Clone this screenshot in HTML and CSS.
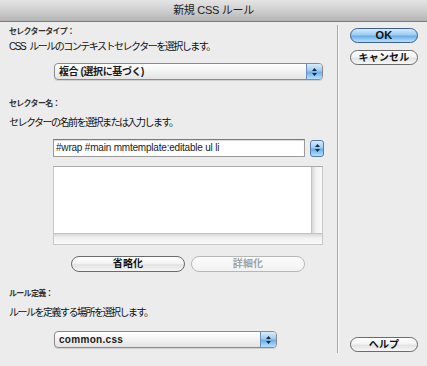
FILE: index.html
```html
<!DOCTYPE html>
<html lang="ja">
<head>
    <meta charset="UTF-8">
    <title>新規 CSS ルール</title>
    <link rel="stylesheet" href="styles.css">
</head>
<body>
    <div class="window">
        <div class="titlebar">新規 CSS ルール</div>

        <div class="content">
            <div class="main">
                <div class="label">セレクタータイプ：</div>
                <div class="desc">CSS ルールのコンテキストセレクターを選択します。</div>
                <div class="popup popup-type">
                    <span class="popup-label">複合 (選択に基づく)</span>
                    <span class="arrows">
                        <svg width="7" height="10" viewBox="0 0 7 10"><path d="M3.5 1 L6 4 H1 Z M3.5 9 L6 6 H1 Z" fill="#1d2a3a"/></svg>
                    </span>
                </div>

                <div class="label label-gap">セレクター名：</div>
                <div class="desc desc-gap">セレクターの名前を選択または入力します。</div>
                <div class="field-row">
                    <div class="field">#wrap #main mmtemplate:editable ul li</div>
                    <span class="stepper">
                        <svg width="7" height="10" viewBox="0 0 7 10"><path d="M3.5 1 L6 4 H1 Z M3.5 9 L6 6 H1 Z" fill="#1d2a3a"/></svg>
                    </span>
                </div>
                <div class="list">
                    <div class="list-body">
                        <div class="list-area"></div>
                        <div class="vscroll"></div>
                    </div>
                    <div class="hscroll"></div>
                </div>
                <div class="btn-row">
                    <button class="pill wide">省略化</button>
                    <button class="pill wide" disabled>詳細化</button>
                </div>

                <div class="label label-gap2">ルール定義：</div>
                <div class="desc desc-gap">ルールを定義する場所を選択します。</div>
                <div class="popup popup-file">
                    <span class="popup-label latin">common.css</span>
                    <span class="arrows">
                        <svg width="7" height="10" viewBox="0 0 7 10"><path d="M3.5 1 L6 4 H1 Z M3.5 9 L6 6 H1 Z" fill="#1d2a3a"/></svg>
                    </span>
                </div>
            </div>

            <div class="divider"></div>

            <div class="side">
                <button class="pill default">OK</button>
                <button class="pill cancel">キャンセル</button>
                <button class="pill help">ヘルプ</button>
            </div>
        </div>
    </div>
</body>
</html>
```

FILE: styles.css
```css
html, body {
    margin: 0;
    padding: 0;
}
body {
    width: 427px;
    height: 366px;
    overflow: hidden;
    background-color: #ececec;
    font-family: "Liberation Sans", "Noto Sans CJK JP", sans-serif;
    color: #1a1a1a;
}
.window {
    display: flex;
    flex-direction: column;
    height: 366px;
}
.titlebar {
    height: 21px;
    line-height: 21px;
    text-align: center;
    font-size: 11px;
    letter-spacing: -0.3px;
    color: #222;
    background: linear-gradient(#e4e4e4, #cfcfcf 50%, #b4b4b4);
    border-bottom: 1px solid #7c7c7c;
}
.content {
    flex: 1;
    display: flex;
}
.main {
    width: 328px;
    padding-left: 9px;
    display: flex;
    flex-direction: column;
}
.label {
    margin-top: 4px;
    height: 12px;
    line-height: 12px;
    font-size: 8px;
    font-weight: bold;
    letter-spacing: -0.7px;
    color: #333;
}
.label-gap {
    margin-top: 18px;
}
.label-gap2 {
    margin-top: 16px;
}
.desc {
    margin-top: 2px;
    height: 14px;
    line-height: 14px;
    font-size: 10px;
    letter-spacing: -1.5px;
    word-spacing: 3px;
    color: #111;
}
.desc-gap {
    margin-top: 6px;
}
.popup {
    display: flex;
    margin-left: 45px;
    height: 15px;
    border: 1px solid #8a8a8a;
    border-radius: 4px;
    background: linear-gradient(#ffffff, #f2f2f2 50%, #e4e4e4);
    box-shadow: 0 1px 1px rgba(0, 0, 0, 0.12);
    overflow: hidden;
}
.popup-type {
    margin-top: 9px;
    width: 267px;
}
.popup-file {
    margin-top: 11px;
    width: 221px;
}
.popup-label {
    flex: 1;
    padding-left: 4px;
    line-height: 15px;
    font-size: 10px;
    font-weight: bold;
    letter-spacing: -0.4px;
}
.popup-label.latin {
    letter-spacing: 0.3px;
}
.arrows {
    width: 15px;
    display: flex;
    align-items: center;
    justify-content: center;
    border-left: 1px solid #6f8fbf;
    background: linear-gradient(#d9ecfb, #9ccbf3 45%, #6aaee9 55%, #b6e0fd);
}
.field-row {
    display: flex;
    align-items: center;
    margin-top: 9px;
    margin-left: 44px;
    height: 18px;
}
.field {
    width: 248px;
    height: 16px;
    line-height: 16px;
    padding-left: 2px;
    border: 1px solid #9a9a9a;
    border-top-color: #7a7a7a;
    background-color: #fff;
    font-size: 10px;
    letter-spacing: -0.2px;
    box-shadow: inset 0 1px 1px rgba(0, 0, 0, 0.15);
}
.stepper {
    margin-left: 5px;
    width: 12px;
    height: 15px;
    display: flex;
    align-items: center;
    justify-content: center;
    border: 1px solid #5a7aa8;
    border-radius: 3px;
    background: linear-gradient(#d9ecfb, #9ccbf3 45%, #6aaee9 55%, #b6e0fd);
}
.list {
    margin-top: 9px;
    margin-left: 44px;
    width: 268px;
    height: 77px;
    border: 1px solid #c8c8c8;
    border-top-color: #a8a8a8;
    display: flex;
    flex-direction: column;
}
.list-body {
    flex: 1;
    display: flex;
}
.list-area {
    flex: 1;
    background-color: #fff;
}
.vscroll {
    width: 10px;
    background: linear-gradient(90deg, #d8d8d8, #f2f2f2 40%, #fafafa);
    border-left: 1px solid #c4c4c4;
}
.hscroll {
    height: 10px;
    background: linear-gradient(#d8d8d8, #f2f2f2 40%, #fafafa);
    border-top: 1px solid #c4c4c4;
}
.btn-row {
    display: flex;
    gap: 6px;
    margin-top: 11px;
    margin-left: 62px;
}
.pill {
    height: 16px;
    padding: 0;
    border: 1px solid #6a6a6a;
    border-radius: 8px;
    background: linear-gradient(#ffffff, #f4f4f4 45%, #e2e2e2 55%, #f6f6f6);
    font-family: "Liberation Sans", "Noto Sans CJK JP", sans-serif;
    font-size: 10px;
    font-weight: bold;
    letter-spacing: 0.2px;
    line-height: 14px;
    color: #111;
}
.pill.wide {
    width: 114px;
}
.pill:disabled {
    border-color: #b6b6b6;
    color: #a2a2a2;
    background: linear-gradient(#fbfbfb, #f2f2f2);
}
.divider {
    margin-top: 3px;
    margin-bottom: 13px;
    width: 1px;
    background-color: #a9a9a9;
    box-shadow: 1px 0 0 #f8f8f8;
}
.side {
    display: flex;
    flex-direction: column;
    padding-left: 12px;
}
.side .pill {
    width: 68px;
    height: 15px;
    line-height: 13px;
}
.pill.default {
    margin-top: 6px;
    border-color: #3d5f8e;
    font-size: 11px;
    background: linear-gradient(#d6ebfb, #9ccbf3 45%, #6aaee9 55%, #b8e2fe);
}
.pill.cancel {
    margin-top: 7px;
}
.pill.help {
    margin-top: auto;
    margin-bottom: 14px;
}
```
